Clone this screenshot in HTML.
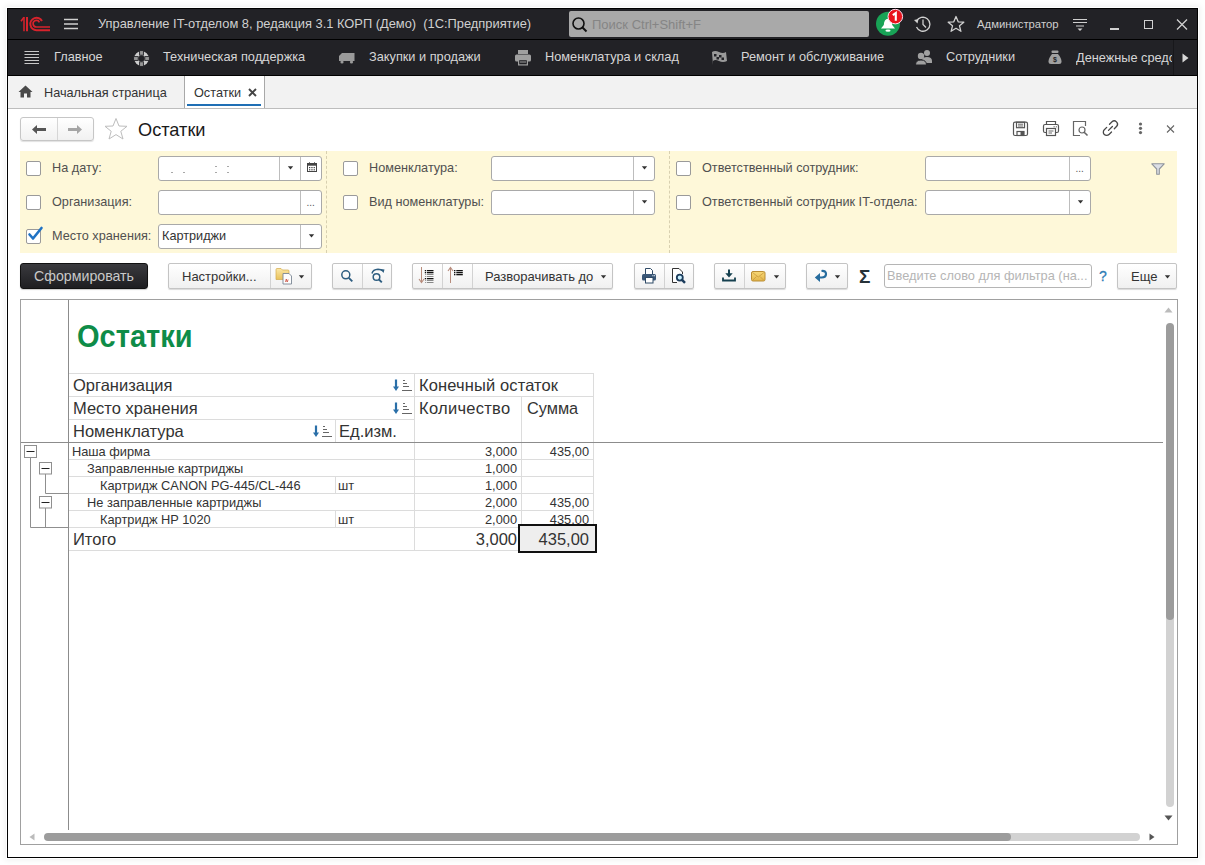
<!DOCTYPE html>
<html><head><meta charset="utf-8">
<style>
*{box-sizing:border-box;margin:0;padding:0}
html,body{width:1205px;height:865px;overflow:hidden;background:#fff;font-family:"Liberation Sans",sans-serif}
.a{position:absolute}
.t{position:absolute;white-space:nowrap;line-height:1}
svg{position:absolute;overflow:visible}
.tt{color:#d0d0d0;font-size:12.86px}
.nt{color:#d6d6d6;font-size:12.75px}
.lbl{color:#505050;font-size:12.7px}
.cb{position:absolute;width:15px;height:15px;border:1px solid #9a9a9a;border-radius:2px;background:#fff}
.inp{position:absolute;height:25px;border:1px solid #a9a9a9;border-radius:3px;background:#fff}
.btn{position:absolute;height:27px;border:1px solid #c4c4c4;border-radius:2px;background:linear-gradient(#ffffff,#f0f0f0);box-shadow:0 1px 1px rgba(0,0,0,.15)}
</style></head><body>
<!-- window frame -->
<div class="a" style="left:7px;top:8px;width:1191px;height:850px;border:1px solid #000;background:#fff;box-shadow:0 0 0 1px #fff,0 0 6px 2px rgba(0,0,0,0.07)"></div>
<!-- title bar -->
<div class="a" style="left:8px;top:9px;width:1189px;height:30px;background:#222226"></div>
<div class="a" style="left:8px;top:39px;width:1189px;height:1px;background:#000"></div>
<!-- nav bar -->
<div class="a" style="left:8px;top:40px;width:1189px;height:35px;background:#222226"></div>
<div class="a" style="left:8px;top:75px;width:1189px;height:1px;background:#000"></div>
<!-- tab bar -->
<div class="a" style="left:8px;top:76px;width:1189px;height:32px;background:#f2f2f2"></div>
<div class="a" style="left:8px;top:108px;width:1189px;height:1px;background:#bdbdbd"></div>

<!-- title bar content -->
<svg style="left:20px;top:15px" width="32" height="18" viewBox="0 0 32 18">
  <g fill="none" stroke="#d8232c">
    <path d="M1 6.2 L4 2.3" stroke-width="1.5"/>
    <path d="M4 2 V16.2" stroke-width="1.5"/>
    <path d="M7 2 V16.2" stroke-width="2"/>
    <path d="M30 15.2 H16.5 A6.2 6.2 0 1 1 22 6" stroke-width="1.9"/>
    <path d="M30 12 H16.5 A3.3 3.3 0 1 1 19.4 7.3" stroke-width="1.7"/>
  </g>
</svg>
<svg style="left:64px;top:18px" width="15" height="12" viewBox="0 0 15 12"><g stroke="#d0d0d0" stroke-width="1.3"><path d="M0 1.5H14M0 6H14M0 10.5H14"/></g></svg>
<div class="t tt" style="left:98px;top:18px">Управление IT-отделом 8, редакция 3.1 КОРП (Демо)&nbsp; (1С:Предприятие)</div>
<div class="a" style="left:569px;top:11px;width:300px;height:26px;background:#a9a9a9;border-radius:2px"></div>
<svg style="left:571px;top:16px" width="18" height="18" viewBox="0 0 18 18"><g fill="none" stroke="#111" stroke-width="1.6"><circle cx="7.5" cy="7.5" r="5.5"/><path d="M11.5 11.5L15.5 15.5" stroke-width="2"/></g></svg>
<div class="t" style="left:592px;top:18px;font-size:13px;color:#858585">Поиск Ctrl+Shift+F</div>
<svg style="left:876px;top:12px" width="28" height="26" viewBox="0 0 28 26">
  <circle cx="12" cy="11.8" r="12" fill="#18a356"/>
  <path d="M5 16.5 L7.8 13 Q8 7.2 12 6.8 Q16 7.2 16.2 13 L19 16.5Z" fill="#fff"/>
  <ellipse cx="12" cy="18.7" rx="2.6" ry="1.1" fill="#fff"/>
  <circle cx="19.3" cy="4.6" r="7.3" fill="#e8141c" stroke="#fde" stroke-width="1"/>
  <path d="M16.8 3.2 L19.8 1 V8.8" fill="none" stroke="#fff" stroke-width="2.1" stroke-linejoin="miter"/>
</svg>
<svg style="left:913px;top:15px" width="20" height="18" viewBox="0 0 20 18"><g fill="none" stroke="#d0d0d0" stroke-width="1.3"><path d="M3.5 6.5 A7 7 0 1 1 3.5 12"/><path d="M10 4.5V9.5L13 12.5"/></g><path d="M1 5 L5.5 4 L4.5 8.5Z" fill="#d0d0d0"/></svg>
<svg style="left:946px;top:15px" width="20" height="18" viewBox="0 0 20 18"><path d="M10 1.5 L12.2 6.8 L17.8 7.2 L13.5 10.8 L14.9 16.3 L10 13.3 L5.1 16.3 L6.5 10.8 L2.2 7.2 L7.8 6.8Z" fill="none" stroke="#cfcfcf" stroke-width="1.3" stroke-linejoin="round"/></svg>
<div class="t" style="left:977px;top:19px;font-size:11.3px;color:#cfcfcf">Администратор</div>
<svg style="left:1072px;top:18px" width="16" height="15" viewBox="0 0 16 15"><g stroke="#cfcfcf" stroke-width="1.2"><path d="M1 1.5H15M1 4.5H15M4 8H12"/></g><path d="M5.5 10.5H10.5L8 13Z" fill="#cfcfcf"/></svg>
<div class="a" style="left:1110px;top:28px;width:9px;height:1.5px;background:#d0d0d0"></div>
<div class="a" style="left:1144px;top:20px;width:9px;height:9px;border:1.3px solid #d0d0d0"></div>
<svg style="left:1176px;top:19px" width="12" height="11" viewBox="0 0 12 11"><path d="M1 0.5L11 10.5M11 0.5L1 10.5" stroke="#d0d0d0" stroke-width="1.3"/></svg>

<!-- nav content -->
<svg style="left:24px;top:50px" width="16" height="15" viewBox="0 0 16 15"><g stroke="#c8c8c8" stroke-width="1.1"><path d="M0.5 1.5H15M0.5 4.5H15M0.5 7.5H15M0.5 10.5H15M0.5 13.5H15"/></g></svg>
<div class="t nt" style="left:54px;top:51px">Главное</div>
<svg style="left:133px;top:50px" width="17" height="17" viewBox="0 0 17 17"><circle cx="8.5" cy="8.5" r="5" fill="none" stroke="#cdcdcd" stroke-width="4.6"/><g fill="#979797" stroke="#232327" stroke-width="0.9"><rect x="6.6" y="0.6" width="3.8" height="4.6"/><rect x="6.6" y="11.8" width="3.8" height="4.6"/><rect x="0.6" y="6.6" width="4.6" height="3.8"/><rect x="11.8" y="6.6" width="4.6" height="3.8"/></g><circle cx="8.5" cy="8.5" r="3" fill="#232327"/></svg>
<div class="t nt" style="left:163px;top:51px">Техническая поддержка</div>
<svg style="left:338px;top:52px" width="18" height="12" viewBox="0 0 18 12"><path d="M1 9 V4 L4 1 H16.5 V9Z" fill="#9a9a9a"/><circle cx="4" cy="10" r="1.6" fill="#9a9a9a"/><circle cx="13.5" cy="10" r="1.6" fill="#9a9a9a"/></svg>
<div class="t nt" style="left:369px;top:51px">Закупки и продажи</div>
<svg style="left:514px;top:49px" width="18" height="18" viewBox="0 0 18 18"><g fill="#a0a0a0"><rect x="4" y="1" width="10" height="4"/><rect x="1" y="5.5" width="16" height="7" rx="1.5"/><rect x="4" y="10" width="10" height="6.5"/></g><g fill="#232327"><rect x="5.2" y="11.2" width="7.6" height="4.1"/></g><rect x="6" y="12.5" width="6" height="1" fill="#a0a0a0"/></svg>
<div class="t nt" style="left:545px;top:51px">Номенклатура и склад</div>
<svg style="left:711px;top:50px" width="17" height="16" viewBox="0 0 17 16"><path d="M2 15 L1 2 Q4 0 8 2 Q12 4 15 2 L16 11 Q12 13 8 11 Q4 9 2 11" fill="#9a9a9a"/><g fill="#232327"><rect x="3" y="4" width="2.5" height="2.5"/><rect x="8" y="5" width="2.5" height="2.5"/><rect x="5.5" y="7" width="2.5" height="2.5"/><rect x="10.5" y="7.5" width="2.5" height="2.5"/></g></svg>
<div class="t nt" style="left:741px;top:51px">Ремонт и обслуживание</div>
<svg style="left:915px;top:49px" width="18" height="17" viewBox="0 0 18 17"><g fill="#a0a0a0"><circle cx="12" cy="4" r="3"/><path d="M7 12 Q7 8 12 8 Q17 8 17 12 V14 H7Z"/><circle cx="6" cy="7" r="3.2"/><path d="M0.5 16 Q0.5 11 6 11 Q11.5 11 11.5 16Z" stroke="#232327" stroke-width="1"/></g></svg>
<div class="t nt" style="left:946px;top:51px">Сотрудники</div>
<svg style="left:1048px;top:50px" width="14" height="15" viewBox="0 0 14 15"><g fill="#a0a0a0"><rect x="3.5" y="0.5" width="7" height="2.5" rx="1"/><path d="M4 4 H10 Q13.5 8 13.5 11.5 Q13.5 14 11 14 H3 Q0.5 14 0.5 11.5 Q0.5 8 4 4Z"/></g><text x="7" y="12" font-family="Liberation Sans" font-size="7" font-weight="bold" fill="#232327" text-anchor="middle">$</text></svg>
<div class="a" style="left:1076px;top:40px;width:96px;height:35px;overflow:hidden"><div class="t nt" style="left:0;top:12px">Денежные средства</div></div>
<div class="a" style="left:1173px;top:40px;width:1px;height:35px;background:#18181b"></div>
<svg style="left:1182px;top:53px" width="7" height="10" viewBox="0 0 7 10"><path d="M0.5 0.5 L6.5 5 L0.5 9.5Z" fill="#d8d8d8"/></svg>


<!-- tab bar content -->
<svg style="left:18px;top:85px" width="15" height="13" viewBox="0 0 15 13"><path d="M7.5 0.5 L14.5 7 H12.5 V12.5 H9 V8.5 H6 V12.5 H2.5 V7 H0.5Z" fill="#4a4a4a"/></svg>
<div class="t" style="left:44px;top:87px;font-size:12.7px;color:#333">Начальная страница</div>
<div class="a" style="left:184px;top:76px;width:81px;height:32px;background:#fff;border-left:1px solid #a8a8a8;border-right:1px solid #a8a8a8"></div>
<div class="t" style="left:194px;top:87px;font-size:12.7px;color:#333">Остатки</div>
<svg style="left:248px;top:88px" width="9" height="9" viewBox="0 0 9 9"><path d="M1 1L8 8M8 1L1 8" stroke="#444" stroke-width="1.9"/></svg>
<div class="a" style="left:187px;top:104px;width:74px;height:2px;background:#1f6fb5"></div>

<!-- form header -->
<div class="a" style="left:20px;top:117px;width:74px;height:24px;border:1px solid #c6c6c6;border-radius:3px;background:linear-gradient(#fff,#f1f1f1);box-shadow:0 1px 1px rgba(0,0,0,.12)"></div>
<div class="a" style="left:57px;top:118px;width:1px;height:22px;background:#d6d6d6"></div>
<svg style="left:31px;top:124px" width="16" height="11" viewBox="0 0 16 11"><path d="M1 5.5 L6 1 V4 H15 V7 H6 V10Z" fill="#555"/></svg>
<svg style="left:67px;top:124px" width="16" height="11" viewBox="0 0 16 11"><path d="M15 5.5 L10 1 V4 H1 V7 H10 V10Z" fill="#a5a5a5"/></svg>
<svg style="left:103px;top:117px" width="26" height="24" viewBox="0 0 26 24"><path d="M13 1.5 L16 9 L24 9.3 L17.8 14.3 L20 22 L13 17.6 L6 22 L8.2 14.3 L2 9.3 L10 9Z" fill="none" stroke="#bdbdbd" stroke-width="1" stroke-linejoin="round"/></svg>
<div class="t" style="left:138px;top:121px;font-size:18.2px;color:#1a1a1a">Остатки</div>

<svg style="left:1012px;top:121px" width="17" height="16" viewBox="0 0 17 16"><g fill="none" stroke="#555" stroke-width="1.2"><rect x="1.5" y="1.2" width="14" height="13.3" rx="1.5"/><rect x="4.5" y="1.2" width="8" height="5.5"/><path d="M6 3.2H11M6 5H11" stroke-width="0.9"/><rect x="5" y="10.5" width="7" height="4"/></g><rect x="8.5" y="11" width="3.5" height="3.5" fill="#555"/></svg>
<svg style="left:1042px;top:120px" width="18" height="17" viewBox="0 0 18 17"><g fill="none" stroke="#555" stroke-width="1.2"><path d="M4.5 4.5 V1.5 H13.5 V4.5"/><path d="M4.5 12.5 H3 Q1.5 12.5 1.5 11 V6 Q1.5 4.5 3 4.5 H15 Q16.5 4.5 16.5 6 V11 Q16.5 12.5 15 12.5 H13.5"/><rect x="4.5" y="8.5" width="9" height="7"/><path d="M6.5 11H11.5M6.5 13H10" stroke-width="0.9"/><path d="M11.5 6.8H12.8M13.8 6.8H15" stroke-width="0.9"/></g></svg>
<svg style="left:1072px;top:120px" width="17" height="17" viewBox="0 0 17 17"><g fill="none" stroke="#666" stroke-width="1.2"><path d="M8 15.5 H1.5 V1.5 H13.5 V6"/><circle cx="10" cy="10" r="3"/><path d="M12.2 12.2 L15.5 15.5" stroke-width="1.6"/></g></svg>
<svg style="left:1100px;top:118px" width="20" height="20" viewBox="0 0 20 20"><g fill="none" stroke="#474747" stroke-width="1.3" stroke-linecap="round"><path d="M9.5 6.2 L12 3.7 A3.3 3.3 0 0 1 16.7 8.3 L14.3 10.7"/><path d="M11.5 14 L9 16.5 A3.3 3.3 0 0 1 4.3 11.8 L6.7 9.4"/><path d="M8.5 12.4 L12.4 8.5"/></g></svg>
<svg style="left:1138px;top:122px" width="5" height="13" viewBox="0 0 5 13"><g fill="#666"><circle cx="2.5" cy="2" r="1.6"/><circle cx="2.5" cy="6.3" r="1.6"/><circle cx="2.5" cy="10.6" r="1.6"/></g></svg>
<svg style="left:1166px;top:125px" width="9" height="8" viewBox="0 0 9 8"><path d="M1 0.5L8 7.5M8 0.5L1 7.5" stroke="#666" stroke-width="1.1"/></svg>

<!-- filter panel -->
<div class="a" style="left:20px;top:151px;width:1157px;height:102px;background:#fef8d9"></div>
<div class="a" style="left:326px;top:151px;width:0;height:102px;border-left:1px dashed #d8d0b0"></div>
<div class="a" style="left:669px;top:151px;width:0;height:102px;border-left:1px dashed #d8d0b0"></div>
<div class="cb" style="left:26px;top:161px"></div><div class="t lbl" style="left:52px;top:162px">На дату:</div><div class="inp" style="left:158px;top:156px;width:164px"></div><div class="a" style="left:300px;top:157px;width:1px;height:23px;background:#bdbdbd"></div><svg style="left:306.5px;top:162px" width="10" height="10" viewBox="0 0 10 10"><rect x="0.5" y="1.5" width="9" height="8" fill="none" stroke="#444" stroke-width="1"/><rect x="0.5" y="1.5" width="9" height="2.2" fill="#444"/><path d="M2.5 0.3V2M7.5 0.3V2" stroke="#444"/><g fill="#444"><rect x="2" y="5" width="1.3" height="1.2"/><rect x="4.3" y="5" width="1.3" height="1.2"/><rect x="6.6" y="5" width="1.3" height="1.2"/><rect x="2" y="7.2" width="1.3" height="1.2"/><rect x="4.3" y="7.2" width="1.3" height="1.2"/><rect x="6.6" y="7.2" width="1.3" height="1.2"/></g></svg><div class="a" style="left:279px;top:157px;width:1px;height:23px;background:#bdbdbd"></div><svg style="left:287.0px;top:166px" width="7" height="4" viewBox="0 0 7 4"><path d="M0.8 0.3H6.2L3.5 3.4Z" fill="#333"/></svg><div class="a" style="left:171px;top:172px;width:2px;height:1px;background:#a8a8a8"></div><div class="a" style="left:183px;top:172px;width:2px;height:1px;background:#a8a8a8"></div><div class="a" style="left:215px;top:166px;width:2px;height:1px;background:#a8a8a8"></div><div class="a" style="left:215px;top:172px;width:2px;height:1px;background:#a8a8a8"></div><div class="a" style="left:227px;top:166px;width:2px;height:1px;background:#a8a8a8"></div><div class="a" style="left:227px;top:172px;width:2px;height:1px;background:#a8a8a8"></div><div class="cb" style="left:26px;top:195px"></div><div class="t lbl" style="left:52px;top:196px">Организация:</div><div class="inp" style="left:158px;top:190px;width:164px"></div><div class="a" style="left:300px;top:191px;width:1px;height:23px;background:#bdbdbd"></div><div class="t" style="left:306.5px;top:198px;font-size:10px;color:#555">...</div><div class="cb" style="left:26px;top:229px"></div><div class="t lbl" style="left:52px;top:230px">Место хранения:</div><svg style="left:27px;top:226px" width="16" height="16" viewBox="0 0 16 16"><path d="M2.5 8.5 L6 12.5 L14.5 2" fill="none" stroke="#1f72c4" stroke-width="2.6" stroke-linecap="round" stroke-linejoin="round"/></svg><div class="inp" style="left:158px;top:224px;width:164px"></div><div class="a" style="left:300px;top:225px;width:1px;height:23px;background:#bdbdbd"></div><svg style="left:308.0px;top:234px" width="7" height="4" viewBox="0 0 7 4"><path d="M0.8 0.3H6.2L3.5 3.4Z" fill="#333"/></svg><div class="t" style="left:162px;top:230px;font-size:12.7px;color:#333">Картриджи</div><div class="cb" style="left:343px;top:161px"></div><div class="t lbl" style="left:369px;top:162px">Номенклатура:</div><div class="inp" style="left:491px;top:156px;width:164px"></div><div class="a" style="left:633px;top:157px;width:1px;height:23px;background:#bdbdbd"></div><svg style="left:641.0px;top:166px" width="7" height="4" viewBox="0 0 7 4"><path d="M0.8 0.3H6.2L3.5 3.4Z" fill="#333"/></svg><div class="cb" style="left:343px;top:195px"></div><div class="t lbl" style="left:369px;top:196px">Вид номенклатуры:</div><div class="inp" style="left:491px;top:190px;width:164px"></div><div class="a" style="left:633px;top:191px;width:1px;height:23px;background:#bdbdbd"></div><svg style="left:641.0px;top:200px" width="7" height="4" viewBox="0 0 7 4"><path d="M0.8 0.3H6.2L3.5 3.4Z" fill="#333"/></svg><div class="cb" style="left:676px;top:161px"></div><div class="t lbl" style="left:702px;top:162px">Ответственный сотрудник:</div><div class="inp" style="left:925px;top:156px;width:166px"></div><div class="a" style="left:1069px;top:157px;width:1px;height:23px;background:#bdbdbd"></div><div class="t" style="left:1075.5px;top:164px;font-size:10px;color:#555">...</div><div class="cb" style="left:676px;top:195px"></div><div class="t lbl" style="left:702px;top:196px">Ответственный сотрудник IT-отдела:</div><div class="inp" style="left:925px;top:190px;width:166px"></div><div class="a" style="left:1069px;top:191px;width:1px;height:23px;background:#bdbdbd"></div><svg style="left:1077.0px;top:200px" width="7" height="4" viewBox="0 0 7 4"><path d="M0.8 0.3H6.2L3.5 3.4Z" fill="#333"/></svg><svg style="left:1151px;top:163px" width="14" height="12" viewBox="0 0 14 12"><path d="M0.8 0.8 H13.2 L8.3 6 V11.2 H5.7 V6Z" fill="#dcdfe6" stroke="#8f949c" stroke-width="1.1" stroke-linejoin="round"/></svg>

<!-- toolbar -->
<div class="a" style="left:20px;top:263px;width:128px;height:26px;border-radius:3px;background:linear-gradient(#3a3a3e,#1e1e21);border:1px solid #111;box-shadow:0 1px 1px rgba(0,0,0,.2)"></div>
<div class="t" style="left:34px;top:269px;font-size:14.2px;color:#c9c9c9">Сформировать</div>

<div class="btn" style="left:168px;top:263px;width:144px;height:26px"></div>
<div class="a" style="left:270px;top:264px;width:1px;height:24px;background:#d2d2d2"></div>
<div class="t" style="left:182px;top:270px;font-size:13px;color:#333">Настройки...</div>
<svg style="left:275px;top:267px" width="19" height="18" viewBox="0 0 19 18"><defs><linearGradient id="fg" x1="0" y1="0" x2="0" y2="1"><stop offset="0" stop-color="#fbe7a6"/><stop offset="1" stop-color="#e9c25a"/></linearGradient></defs><path d="M1 2.5 Q1 1.5 2 1.5 H6 L7.5 3 H13 Q14 3 14 4 V12.5 H1Z" fill="url(#fg)" stroke="#d2a94a" stroke-width="0.7"/><path d="M8 6.5 H14 L16.5 9 V17 H8Z" fill="#fdfdfd" stroke="#7b8794" stroke-width="0.9"/><path d="M10.5 15 L11.3 12 L12.1 15 M12.3 15 L13.1 12.5" fill="none" stroke="#c94a3a" stroke-width="0.8"/></svg>
<svg style="left:298px;top:275px" width="7" height="4" viewBox="0 0 7 4"><path d="M0.8 0.3H6.2L3.5 3.4Z" fill="#333"/></svg>

<div class="btn" style="left:332px;top:263px;width:60px;height:26px"></div>
<div class="a" style="left:362px;top:264px;width:1px;height:24px;background:#d2d2d2"></div>
<svg style="left:340px;top:268px" width="14" height="15" viewBox="0 0 14 15"><circle cx="5.8" cy="6.8" r="4" fill="none" stroke="#2d5d80" stroke-width="1.5"/><path d="M8.8 9.8 L12.3 13.3" stroke="#2d5d80" stroke-width="1.9"/></svg>
<svg style="left:369px;top:267px" width="17" height="17" viewBox="0 0 17 17"><path d="M3 6.5 Q4 2.5 9 2.3 Q12 2.3 14 4" fill="none" stroke="#2d5d80" stroke-width="1.5"/><path d="M11.5 2 L15.5 2.5 L14.5 6Z" fill="#2d5d80"/><circle cx="7.5" cy="10" r="3.3" fill="none" stroke="#2d5d80" stroke-width="1.5"/><path d="M10 12.5 L12.8 15.3" stroke="#2d5d80" stroke-width="1.9"/></svg>

<div class="btn" style="left:412px;top:263px;width:201px;height:26px"></div>
<div class="a" style="left:442px;top:264px;width:1px;height:24px;background:#d2d2d2"></div>
<div class="a" style="left:472px;top:264px;width:1px;height:24px;background:#d2d2d2"></div>
<svg style="left:418px;top:266px" width="18" height="19" viewBox="0 0 18 19"><path d="M3.5 1 V16" stroke="#b78c7c" stroke-width="1"/><path d="M1 13 L3.5 16.5 L6 13" fill="none" stroke="#b78c7c" stroke-width="1.1"/><g fill="#111"><rect x="6.8" y="4" width="1.4" height="1.3"/><rect x="9" y="4" width="6.5" height="1.3"/><rect x="6.8" y="6" width="1.4" height="1.3"/><rect x="9" y="6" width="6.5" height="1.3"/><rect x="6.8" y="12" width="1.4" height="1.3"/><rect x="9" y="12" width="6.5" height="1.3"/></g><g fill="#888"><rect x="7.2" y="8" width="1" height="1"/><rect x="9" y="8" width="6.5" height="1"/><rect x="7.2" y="10" width="1" height="1"/><rect x="9" y="10" width="6.5" height="1"/><rect x="7.2" y="14" width="1" height="1"/><rect x="9" y="14" width="6.5" height="1"/><rect x="7.2" y="16" width="1" height="1"/><rect x="9" y="16" width="6.5" height="1"/></g></svg>
<svg style="left:447px;top:266px" width="18" height="19" viewBox="0 0 18 19"><path d="M3.5 17 V2" stroke="#b78c7c" stroke-width="1"/><path d="M1 5 L3.5 1.5 L6 5" fill="none" stroke="#b78c7c" stroke-width="1.1"/><g fill="#111"><rect x="7" y="4" width="1.4" height="1.3"/><rect x="9.3" y="4" width="6.5" height="1.3"/><rect x="7" y="6" width="1.4" height="1.3"/><rect x="9.3" y="6" width="6.5" height="1.3"/><rect x="7" y="8" width="1.4" height="1.3"/><rect x="9.3" y="8" width="6.5" height="1.3"/></g></svg>
<div class="t" style="left:485px;top:270px;font-size:13px;color:#333">Разворачивать до</div>
<svg style="left:600px;top:275px" width="7" height="4" viewBox="0 0 7 4"><path d="M0.8 0.3H6.2L3.5 3.4Z" fill="#333"/></svg>

<div class="btn" style="left:634px;top:263px;width:60px;height:26px"></div>
<div class="a" style="left:664px;top:264px;width:1px;height:24px;background:#d2d2d2"></div>
<svg style="left:640px;top:267px" width="18" height="18" viewBox="0 0 18 18"><path d="M5.5 7.5 V1.5 H10.5 L12.5 3.5 V7.5" fill="#fff" stroke="#2f4a66" stroke-width="1"/><rect x="2" y="7" width="14" height="6.5" rx="1.5" fill="#3b5878"/><rect x="12.3" y="8.2" width="1.2" height="1" fill="#dfe8f0"/><rect x="14" y="8.2" width="1" height="1" fill="#dfe8f0"/><rect x="5.5" y="10.5" width="7.5" height="5.5" fill="#fff" stroke="#2f4a66" stroke-width="1"/></svg>
<svg style="left:670px;top:267px" width="18" height="18" viewBox="0 0 18 18"><path d="M7 15.5 H2.5 V1.5 H9 L12.5 5 V7" fill="#fff" stroke="#333" stroke-width="1"/><circle cx="9.8" cy="10.6" r="3" fill="#c8f0ff" stroke="#1c3c5c" stroke-width="1.8"/><path d="M12 12.8 L15 15.8" stroke="#1c3c5c" stroke-width="2.4"/></svg>

<div class="btn" style="left:714px;top:263px;width:72px;height:26px"></div>
<div class="a" style="left:744px;top:264px;width:1px;height:24px;background:#d2d2d2"></div>
<svg style="left:721px;top:268px" width="16" height="15" viewBox="0 0 16 15"><path d="M8 1.5 V8" stroke="#15404f" stroke-width="2"/><path d="M4.3 5.3 L8 9.5 L11.7 5.3Z" fill="#15404f"/><path d="M2 9.5 V12.5 H14 V9.5" fill="none" stroke="#15404f" stroke-width="1.8"/></svg>
<svg style="left:751px;top:271px" width="15" height="11" viewBox="0 0 15 11"><defs><linearGradient id="mg" x1="0" y1="0" x2="0" y2="1"><stop offset="0" stop-color="#f8d978"/><stop offset="1" stop-color="#e3b54a"/></linearGradient></defs><rect x="0.5" y="0.5" width="13.5" height="9.5" rx="1.5" fill="url(#mg)" stroke="#b98d35" stroke-width="1"/><path d="M1.5 1.5 L7.25 6 L13 1.5 M1.5 9.5 L5.5 5.5 M13 9.5 L9 5.5" fill="none" stroke="#c99b3e" stroke-width="0.8"/></svg>
<svg style="left:773px;top:275px" width="7" height="4" viewBox="0 0 7 4"><path d="M0.8 0.3H6.2L3.5 3.4Z" fill="#333"/></svg>

<div class="btn" style="left:806px;top:263px;width:42px;height:26px"></div>
<svg style="left:814px;top:269px" width="15" height="14" viewBox="0 0 15 14"><path d="M7.5 2 Q12 1.5 12 5 Q12 8.5 7.5 8.5 H5" fill="none" stroke="#266c9e" stroke-width="2.2"/><path d="M0.8 8.5 L6 4 V13Z" fill="#266c9e"/></svg>
<svg style="left:834px;top:275px" width="7" height="4" viewBox="0 0 7 4"><path d="M0.8 0.3H6.2L3.5 3.4Z" fill="#333"/></svg>

<div class="t" style="left:859px;top:267px;font-size:19px;font-weight:bold;color:#263238">&Sigma;</div>
<div class="inp" style="left:884px;top:264px;width:208px;height:24px;border-color:#b5b5b5"></div>
<div class="a" style="left:886px;top:265px;width:202px;height:22px;overflow:hidden"><div class="t" style="left:1px;top:5px;font-size:12.8px;color:#b5b5b5">Введите слово для фильтра (на...</div></div>
<div class="t" style="left:1099px;top:269px;font-size:14px;color:#2f7db5;-webkit-text-stroke:0.3px #2f7db5">?</div>
<div class="btn" style="left:1117px;top:263px;width:60px;height:26px"></div>
<div class="t" style="left:1131px;top:270px;font-size:13px;color:#333">Еще</div>
<svg style="left:1164px;top:275px" width="7" height="4" viewBox="0 0 7 4"><path d="M0.8 0.3H6.2L3.5 3.4Z" fill="#333"/></svg>


<!-- report frame -->
<div class="a" style="left:20px;top:299px;width:1158px;height:546px;border:1px solid #a0a0a0;background:#fff"></div>
<div class="a" style="left:68px;top:300px;width:1px;height:530px;background:#8c8c8c"></div>
<div class="t" style="left:77px;top:321px;font-size:29px;font-weight:bold;color:#0e8c48;transform:scaleY(1.09);transform-origin:0 0">Остатки</div>
<!-- header grid -->
<div class="a" style="left:69px;top:373px;width:525px;height:1px;background:#dcdcdc"></div>
<div class="a" style="left:69px;top:396px;width:525px;height:1px;background:#dcdcdc"></div>
<div class="a" style="left:69px;top:419px;width:346px;height:1px;background:#dcdcdc"></div>
<div class="a" style="left:414px;top:374px;width:1px;height:68px;background:#dcdcdc"></div>
<div class="a" style="left:521px;top:397px;width:1px;height:45px;background:#dcdcdc"></div>
<div class="a" style="left:593px;top:374px;width:1px;height:68px;background:#dcdcdc"></div>
<div class="a" style="left:335px;top:420px;width:1px;height:22px;background:#dcdcdc"></div>
<div class="a" style="left:21px;top:442px;width:1142px;height:1px;background:#8c8c8c"></div>
<div class="t" style="left:73px;top:377px;font-size:16.5px;color:#333">Организация</div>
<div class="t" style="left:73px;top:400px;font-size:16.5px;color:#333">Место хранения</div>
<div class="t" style="left:73px;top:423px;font-size:16.5px;color:#333">Номенклатура</div>
<div class="t" style="left:419px;top:377px;font-size:16.5px;color:#333;letter-spacing:0.12px">Конечный остаток</div>
<div class="t" style="left:419px;top:400px;font-size:16.5px;color:#333;letter-spacing:0.28px">Количество</div>
<div class="t" style="left:527px;top:400px;font-size:16.3px;color:#333">Сумма</div>
<div class="t" style="left:339px;top:423px;font-size:16.5px;color:#333">Ед.изм.</div>
<svg style="left:393px;top:379px" width="20" height="13" viewBox="0 0 20 13"><path d="M3 0.5 V9" stroke="#2a6fa8" stroke-width="2.2"/><path d="M0 7.5 L3 12 L6 7.5Z" fill="#2a6fa8"/><g stroke="#666" stroke-width="1"><path d="M10 1.5H12M10 4.5H14M10 7.5H16M9 11.5H19"/></g></svg><svg style="left:393px;top:402px" width="20" height="13" viewBox="0 0 20 13"><path d="M3 0.5 V9" stroke="#2a6fa8" stroke-width="2.2"/><path d="M0 7.5 L3 12 L6 7.5Z" fill="#2a6fa8"/><g stroke="#666" stroke-width="1"><path d="M10 1.5H12M10 4.5H14M10 7.5H16M9 11.5H19"/></g></svg><svg style="left:313px;top:425px" width="20" height="13" viewBox="0 0 20 13"><path d="M3 0.5 V9" stroke="#2a6fa8" stroke-width="2.2"/><path d="M0 7.5 L3 12 L6 7.5Z" fill="#2a6fa8"/><g stroke="#666" stroke-width="1"><path d="M10 1.5H12M10 4.5H14M10 7.5H16M9 11.5H19"/></g></svg><div class="a" style="left:69px;top:459px;width:525px;height:1px;background:#dcdcdc"></div><div class="t" style="left:72px;top:446px;font-size:12.8px;color:#333">Наша фирма</div><div class="t" style="right:688px;top:446px;font-size:12.8px;color:#333">3,000</div><div class="t" style="right:616px;top:446px;font-size:12.8px;color:#333">435,00</div><div class="a" style="left:69px;top:476px;width:525px;height:1px;background:#dcdcdc"></div><div class="t" style="left:87px;top:463px;font-size:12.8px;color:#333">Заправленные картриджы</div><div class="t" style="right:688px;top:463px;font-size:12.8px;color:#333">1,000</div><div class="a" style="left:69px;top:493px;width:525px;height:1px;background:#dcdcdc"></div><div class="t" style="left:100px;top:480px;font-size:12.8px;color:#333">Картридж CANON PG-445/CL-446</div><div class="a" style="left:335px;top:477px;width:1px;height:16px;background:#dcdcdc"></div><div class="t" style="left:338px;top:480px;font-size:12.8px;color:#333">шт</div><div class="t" style="right:688px;top:480px;font-size:12.8px;color:#333">1,000</div><div class="a" style="left:69px;top:510px;width:525px;height:1px;background:#dcdcdc"></div><div class="t" style="left:87px;top:497px;font-size:12.8px;color:#333">Не заправленные картриджы</div><div class="t" style="right:688px;top:497px;font-size:12.8px;color:#333">2,000</div><div class="t" style="right:616px;top:497px;font-size:12.8px;color:#333">435,00</div><div class="a" style="left:69px;top:527px;width:525px;height:1px;background:#dcdcdc"></div><div class="t" style="left:100px;top:514px;font-size:12.8px;color:#333">Картридж HP 1020</div><div class="a" style="left:335px;top:511px;width:1px;height:16px;background:#dcdcdc"></div><div class="t" style="left:338px;top:514px;font-size:12.8px;color:#333">шт</div><div class="t" style="right:688px;top:514px;font-size:12.8px;color:#333">2,000</div><div class="t" style="right:616px;top:514px;font-size:12.8px;color:#333">435,00</div><div class="a" style="left:414px;top:443px;width:1px;height:107px;background:#dcdcdc"></div><div class="a" style="left:521px;top:443px;width:1px;height:84px;background:#dcdcdc"></div><div class="a" style="left:593px;top:443px;width:1px;height:107px;background:#dcdcdc"></div><div class="a" style="left:69px;top:550px;width:525px;height:1px;background:#dcdcdc"></div><div class="t" style="left:73px;top:531px;font-size:16.5px;color:#333">Итого</div><div class="t" style="right:688px;top:531px;font-size:16.5px;color:#333">3,000</div><div class="a" style="left:518px;top:524px;width:79px;height:29px;border:2px solid #111;background:#eeeeee"></div><div class="t" style="right:616px;top:531px;font-size:16.5px;color:#333">435,00</div>
<svg style="left:20px;top:440px" width="50" height="92" viewBox="0 0 50 92">
<g fill="none" stroke="#8f8f8f" stroke-width="1">
<path d="M10.5 17.5 V87.5 H49"/>
<path d="M25.5 34 V53.5 H49"/>
<path d="M25.5 68 V87.5"/>
<rect x="4.5" y="5.5" width="12" height="12" fill="#fff"/>
<rect x="19.5" y="22.5" width="12" height="11.5" fill="#fff"/>
<rect x="19.5" y="56.5" width="12" height="11.5" fill="#fff"/>
</g>
<g stroke="#222" stroke-width="1"><path d="M6.5 11.5H14.5M21.5 28.5H29.5M21.5 62.5H29.5"/></g>
</svg>
<!-- scrollbars -->
<svg style="left:1164px;top:307px" width="9" height="6" viewBox="0 0 9 6"><path d="M0.5 5.5 L4.5 0.5 L8.5 5.5Z" fill="#bbb"/></svg>
<div class="a" style="left:1166px;top:612px;width:8px;height:195px;border-radius:0 0 4px 4px;background:#d2d2d2"></div><div class="a" style="left:1166px;top:323px;width:8px;height:297px;border-radius:4px;background:#9c9c9c"></div>
<svg style="left:1164px;top:815px" width="9" height="6" viewBox="0 0 9 6"><path d="M0.5 0.5 L4.5 5.5 L8.5 0.5Z" fill="#555"/></svg>
<svg style="left:29px;top:833px" width="6" height="8" viewBox="0 0 6 8"><path d="M5.5 0.5 L0.5 4 L5.5 7.5Z" fill="#bbb"/></svg>
<div class="a" style="left:1000px;top:833px;width:140px;height:8px;border-radius:0 4px 4px 0;background:#d2d2d2"></div><div class="a" style="left:44px;top:833px;width:967px;height:8px;border-radius:4px;background:#9c9c9c"></div>
<svg style="left:1149px;top:833px" width="6" height="8" viewBox="0 0 6 8"><path d="M0.5 0.5 L5.5 4 L0.5 7.5Z" fill="#555"/></svg>

</body></html>
